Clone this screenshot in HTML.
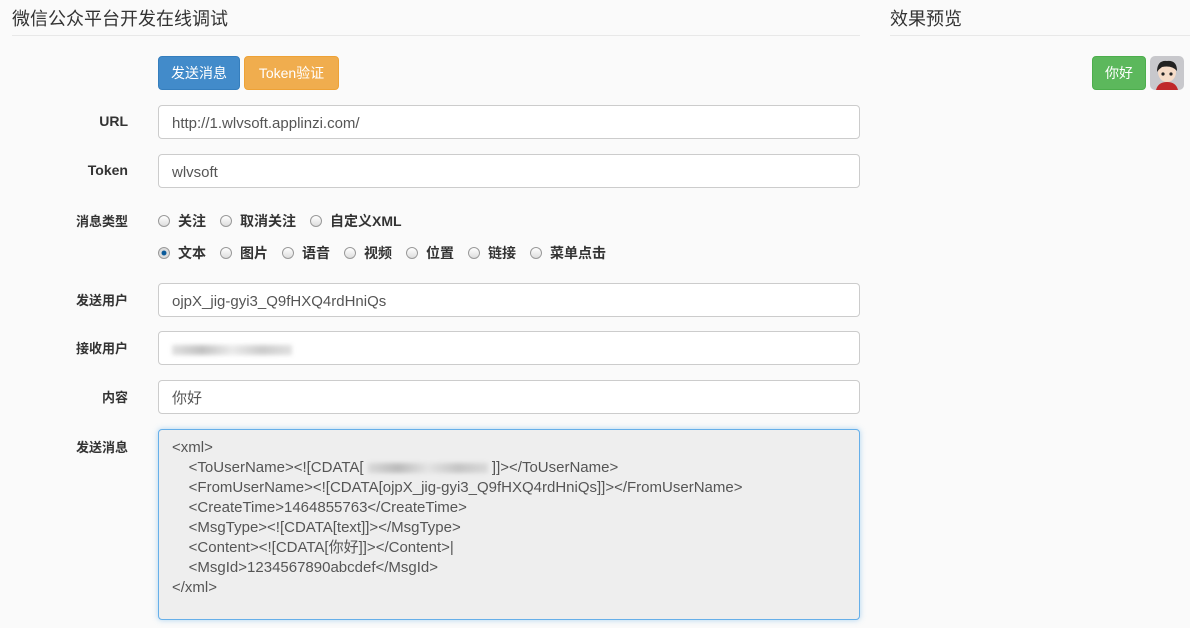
<!DOCTYPE html>
<html><head><meta charset="utf-8"><style>
*{box-sizing:border-box;margin:0;padding:0}
body{width:1190px;height:628px;overflow:hidden;background:#fafafa;font-family:"Liberation Sans","Noto Sans CJK SC",sans-serif;color:#333;font-size:14px;position:relative}
.a{position:absolute}
h3{position:absolute;font-weight:normal;font-size:18px;color:#333;top:5px}
.hr{position:absolute;top:35px;height:1px;background:#e8e8e8}
.btn{position:absolute;top:56px;height:34px;border-radius:4px;color:#fff;font-size:14px;text-align:center;line-height:32px;border:1px solid}
.lab{position:absolute;right:1062px;font-weight:bold;font-size:14px;text-align:right}
.inp{position:absolute;left:158px;width:702px;height:34px;border:1px solid #ccc;border-radius:4px;background:#fff;padding-left:13px;line-height:35px;font-size:15px;color:#555}
.rad{position:absolute;font-weight:bold;font-size:14px}
.rad i{display:inline-block;width:12px;height:12px;border-radius:50%;border:1px solid #999;background:linear-gradient(#fff,#ddd);vertical-align:-1px;margin-right:8px}
.rad i.on{background:radial-gradient(#0a5a9a 30%,#ddd 40%)}
.ta{position:absolute;left:158px;top:429px;width:702px;height:191px;border:1px solid #66afe9;border-radius:4px;background:#eee;box-shadow:0 0 6px rgba(102,175,233,.5);padding:8px 13px;font-size:15px;line-height:20px;color:#555;white-space:pre}
.blur{display:inline-block;width:120px;height:10px;background:linear-gradient(90deg,#ccc,#999,#ddd,#aaa,#ccc);filter:blur(2px);opacity:.6;vertical-align:middle}
</style></head><body>
<h3 style="left:12px">微信公众平台开发在线调试</h3>
<div class="hr" style="left:12px;width:848px"></div>
<h3 style="left:890px">效果预览</h3>
<div class="hr" style="left:890px;width:300px"></div>
<div class="btn" style="left:158px;width:82px;background:#428bca;border-color:#357ebd">发送消息</div>
<div class="btn" style="left:244px;width:95px;background:#f0ad4e;border-color:#eea236">Token验证</div>
<div class="lab" style="top:113px">URL</div><div class="inp" style="top:105px">http://1.wlvsoft.applinzi.com/</div>
<div class="lab" style="top:162px">Token</div><div class="inp" style="top:154px">wlvsoft</div>
<div class="lab" style="top:211px;font-size:13px">消息类型</div>
<div class="rad" style="left:158px;top:211px"><i></i>关注</div>
<div class="rad" style="left:220px;top:211px"><i></i>取消关注</div>
<div class="rad" style="left:310px;top:211px"><i></i>自定义XML</div>
<div class="rad" style="left:158px;top:243px"><i class="on"></i>文本</div>
<div class="rad" style="left:220px;top:243px"><i></i>图片</div>
<div class="rad" style="left:282px;top:243px"><i></i>语音</div>
<div class="rad" style="left:344px;top:243px"><i></i>视频</div>
<div class="rad" style="left:406px;top:243px"><i></i>位置</div>
<div class="rad" style="left:468px;top:243px"><i></i>链接</div>
<div class="rad" style="left:530px;top:243px"><i></i>菜单点击</div>
<div class="lab" style="top:290px;font-size:13px">发送用户</div><div class="inp" style="top:283px">ojpX_jig-gyi3_Q9fHXQ4rdHniQs</div>
<div class="lab" style="top:338px;font-size:13px">接收用户</div><div class="inp" style="top:331px"><span class="blur"></span></div>
<div class="lab" style="top:387px;font-size:13px">内容</div><div class="inp" style="top:380px">你好</div>
<div class="lab" style="top:437px;font-size:13px">发送消息</div>
<div class="ta">&lt;xml&gt;
    &lt;ToUserName&gt;&lt;![CDATA[ <span class="blur"></span> ]]&gt;&lt;/ToUserName&gt;
    &lt;FromUserName&gt;&lt;![CDATA[ojpX_jig-gyi3_Q9fHXQ4rdHniQs]]&gt;&lt;/FromUserName&gt;
    &lt;CreateTime&gt;1464855763&lt;/CreateTime&gt;
    &lt;MsgType&gt;&lt;![CDATA[text]]&gt;&lt;/MsgType&gt;
    &lt;Content&gt;&lt;![CDATA[你好]]&gt;&lt;/Content&gt;|
    &lt;MsgId&gt;1234567890abcdef&lt;/MsgId&gt;
&lt;/xml&gt;</div>
<div class="a" style="left:1092px;top:56px;width:54px;height:34px;background:#5cb85c;border:1px solid #4cae4c;border-radius:4px;color:#fff;text-align:center;line-height:32px">你好</div>
<div class="a" style="left:1150px;top:56px;width:34px;height:34px;background:#c8c8cc;border-radius:5px;overflow:hidden">
<svg width="34" height="34"><ellipse cx="17" cy="16" rx="9" ry="10" fill="#f6dcc8"/><path d="M7 16 Q7 4 17 5 Q27 4 27 15 Q22 9 12 11 Q9 13 7 16Z" fill="#222"/><circle cx="13" cy="18" r="1.6" fill="#222"/><circle cx="21" cy="18" r="1.6" fill="#222"/><path d="M6 34 Q8 26 17 26 Q26 26 28 34Z" fill="#c0282a"/></svg></div>
</body></html>
